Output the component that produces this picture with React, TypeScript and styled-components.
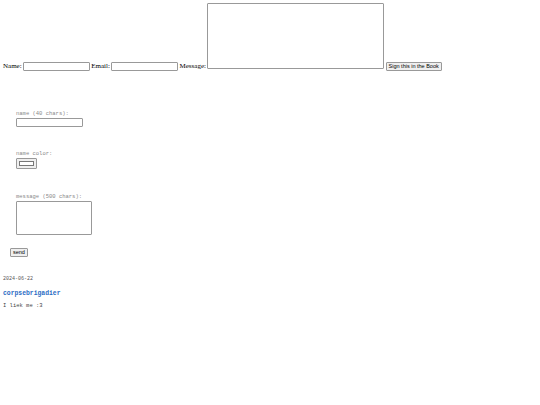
import React from "react";
import styled, { createGlobalStyle } from "styled-components";

const GlobalStyle = createGlobalStyle`
  html, body {
    margin: 0;
    padding: 0;
    background: #ffffff;
  }
  body {
    padding: 3px;
    font-family: "Liberation Serif", "Times New Roman", serif;
    font-size: 7px;
    color: #000;
  }
`;

const SignForm = styled.form`
  display: flex;
  align-items: flex-end;
  gap: 1.3px;
`;

const InlineLabel = styled.span`
  line-height: 9px;
`;

const TextInput = styled.input<{ $w: number }>`
  width: ${({ $w }) => $w}px;
  height: 9px;
  box-sizing: border-box;
  border: 1px solid #999;
  border-radius: 1px;
  padding: 0;
  margin: 0;
  font-size: 6px;
  background: #fff;
`;

const BigArea = styled.textarea<{ $w: number; $h: number; $lift?: number }>`
  width: ${({ $w }) => $w}px;
  height: ${({ $h }) => $h}px;
  box-sizing: border-box;
  border: 1px solid #999;
  border-radius: 1px;
  padding: 0;
  margin: 0 0 ${({ $lift }) => $lift ?? 0}px 0;
  font-size: 6px;
  resize: both;
  background: #fff;

  &::-webkit-resizer {
    background: transparent;
  }
`;

const PlainButton = styled.button`
  height: 9px;
  box-sizing: border-box;
  padding: 0 2px;
  margin: 0;
  font-family: "Liberation Sans", Arial, sans-serif;
  font-size: 5.5px;
  line-height: 7px;
  color: #000;
  background: #efefef;
  border: 1px solid #999;
  border-radius: 1px;
`;

const EntryForm = styled.form`
  display: flex;
  flex-direction: column;
  align-items: flex-start;
  padding: 40px 0 0 13px;
`;

const Field = styled.div<{ $gap: number }>`
  display: flex;
  flex-direction: column;
  margin-bottom: ${({ $gap }) => $gap}px;
`;

const FieldLabel = styled.label`
  font-family: "Liberation Mono", "Courier New", monospace;
  font-size: 5.5px;
  line-height: 6px;
  color: #888;
  margin-bottom: 1px;
`;

const ColorBox = styled.div`
  width: 21px;
  height: 11px;
  box-sizing: border-box;
  border: 1px solid #999;
  border-radius: 1px;
  background: #efefef;
  padding: 2px 2px;
  display: flex;
`;

const ColorSwatch = styled.div`
  flex: 1;
  border: 1px solid #777;
  background: #fff;
`;

const SendRow = styled.div`
  margin-left: -6px;
`;

const Entries = styled.div`
  margin-top: 19px;
  font-family: "Liberation Mono", "Courier New", monospace;
`;

const EntryDate = styled.div`
  font-size: 5px;
  line-height: 6px;
  color: #555;
`;

const EntryName = styled.div`
  margin-top: 8px;
  font-size: 6.4px;
  line-height: 7px;
  font-weight: bold;
  color: #2b6cc4;
`;

const EntryText = styled.div`
  margin-top: 6px;
  font-size: 5.5px;
  line-height: 6px;
  color: #444;
`;

export default function App() {
  return (
    <>
      <GlobalStyle />
      <SignForm onSubmit={(e) => e.preventDefault()}>
        <InlineLabel>Name:</InlineLabel>
        <TextInput $w={67} />
        <InlineLabel>Email:</InlineLabel>
        <TextInput $w={67} />
        <InlineLabel>Message:</InlineLabel>
        <BigArea $w={177} $h={66} $lift={2} />
        <PlainButton>Sign this in the Book</PlainButton>
      </SignForm>

      <EntryForm onSubmit={(e) => e.preventDefault()}>
        <Field $gap={24}>
          <FieldLabel>name (40 chars):</FieldLabel>
          <TextInput $w={67} />
        </Field>
        <Field $gap={25}>
          <FieldLabel>name color:</FieldLabel>
          <ColorBox>
            <ColorSwatch />
          </ColorBox>
        </Field>
        <Field $gap={13}>
          <FieldLabel>message (500 chars):</FieldLabel>
          <BigArea $w={76} $h={34} />
        </Field>
        <SendRow>
          <PlainButton>send</PlainButton>
        </SendRow>
      </EntryForm>

      <Entries>
        <EntryDate>2024-06-22</EntryDate>
        <EntryName>corpsebrigadier</EntryName>
        <EntryText>I liek me :3</EntryText>
      </Entries>
    </>
  );
}
